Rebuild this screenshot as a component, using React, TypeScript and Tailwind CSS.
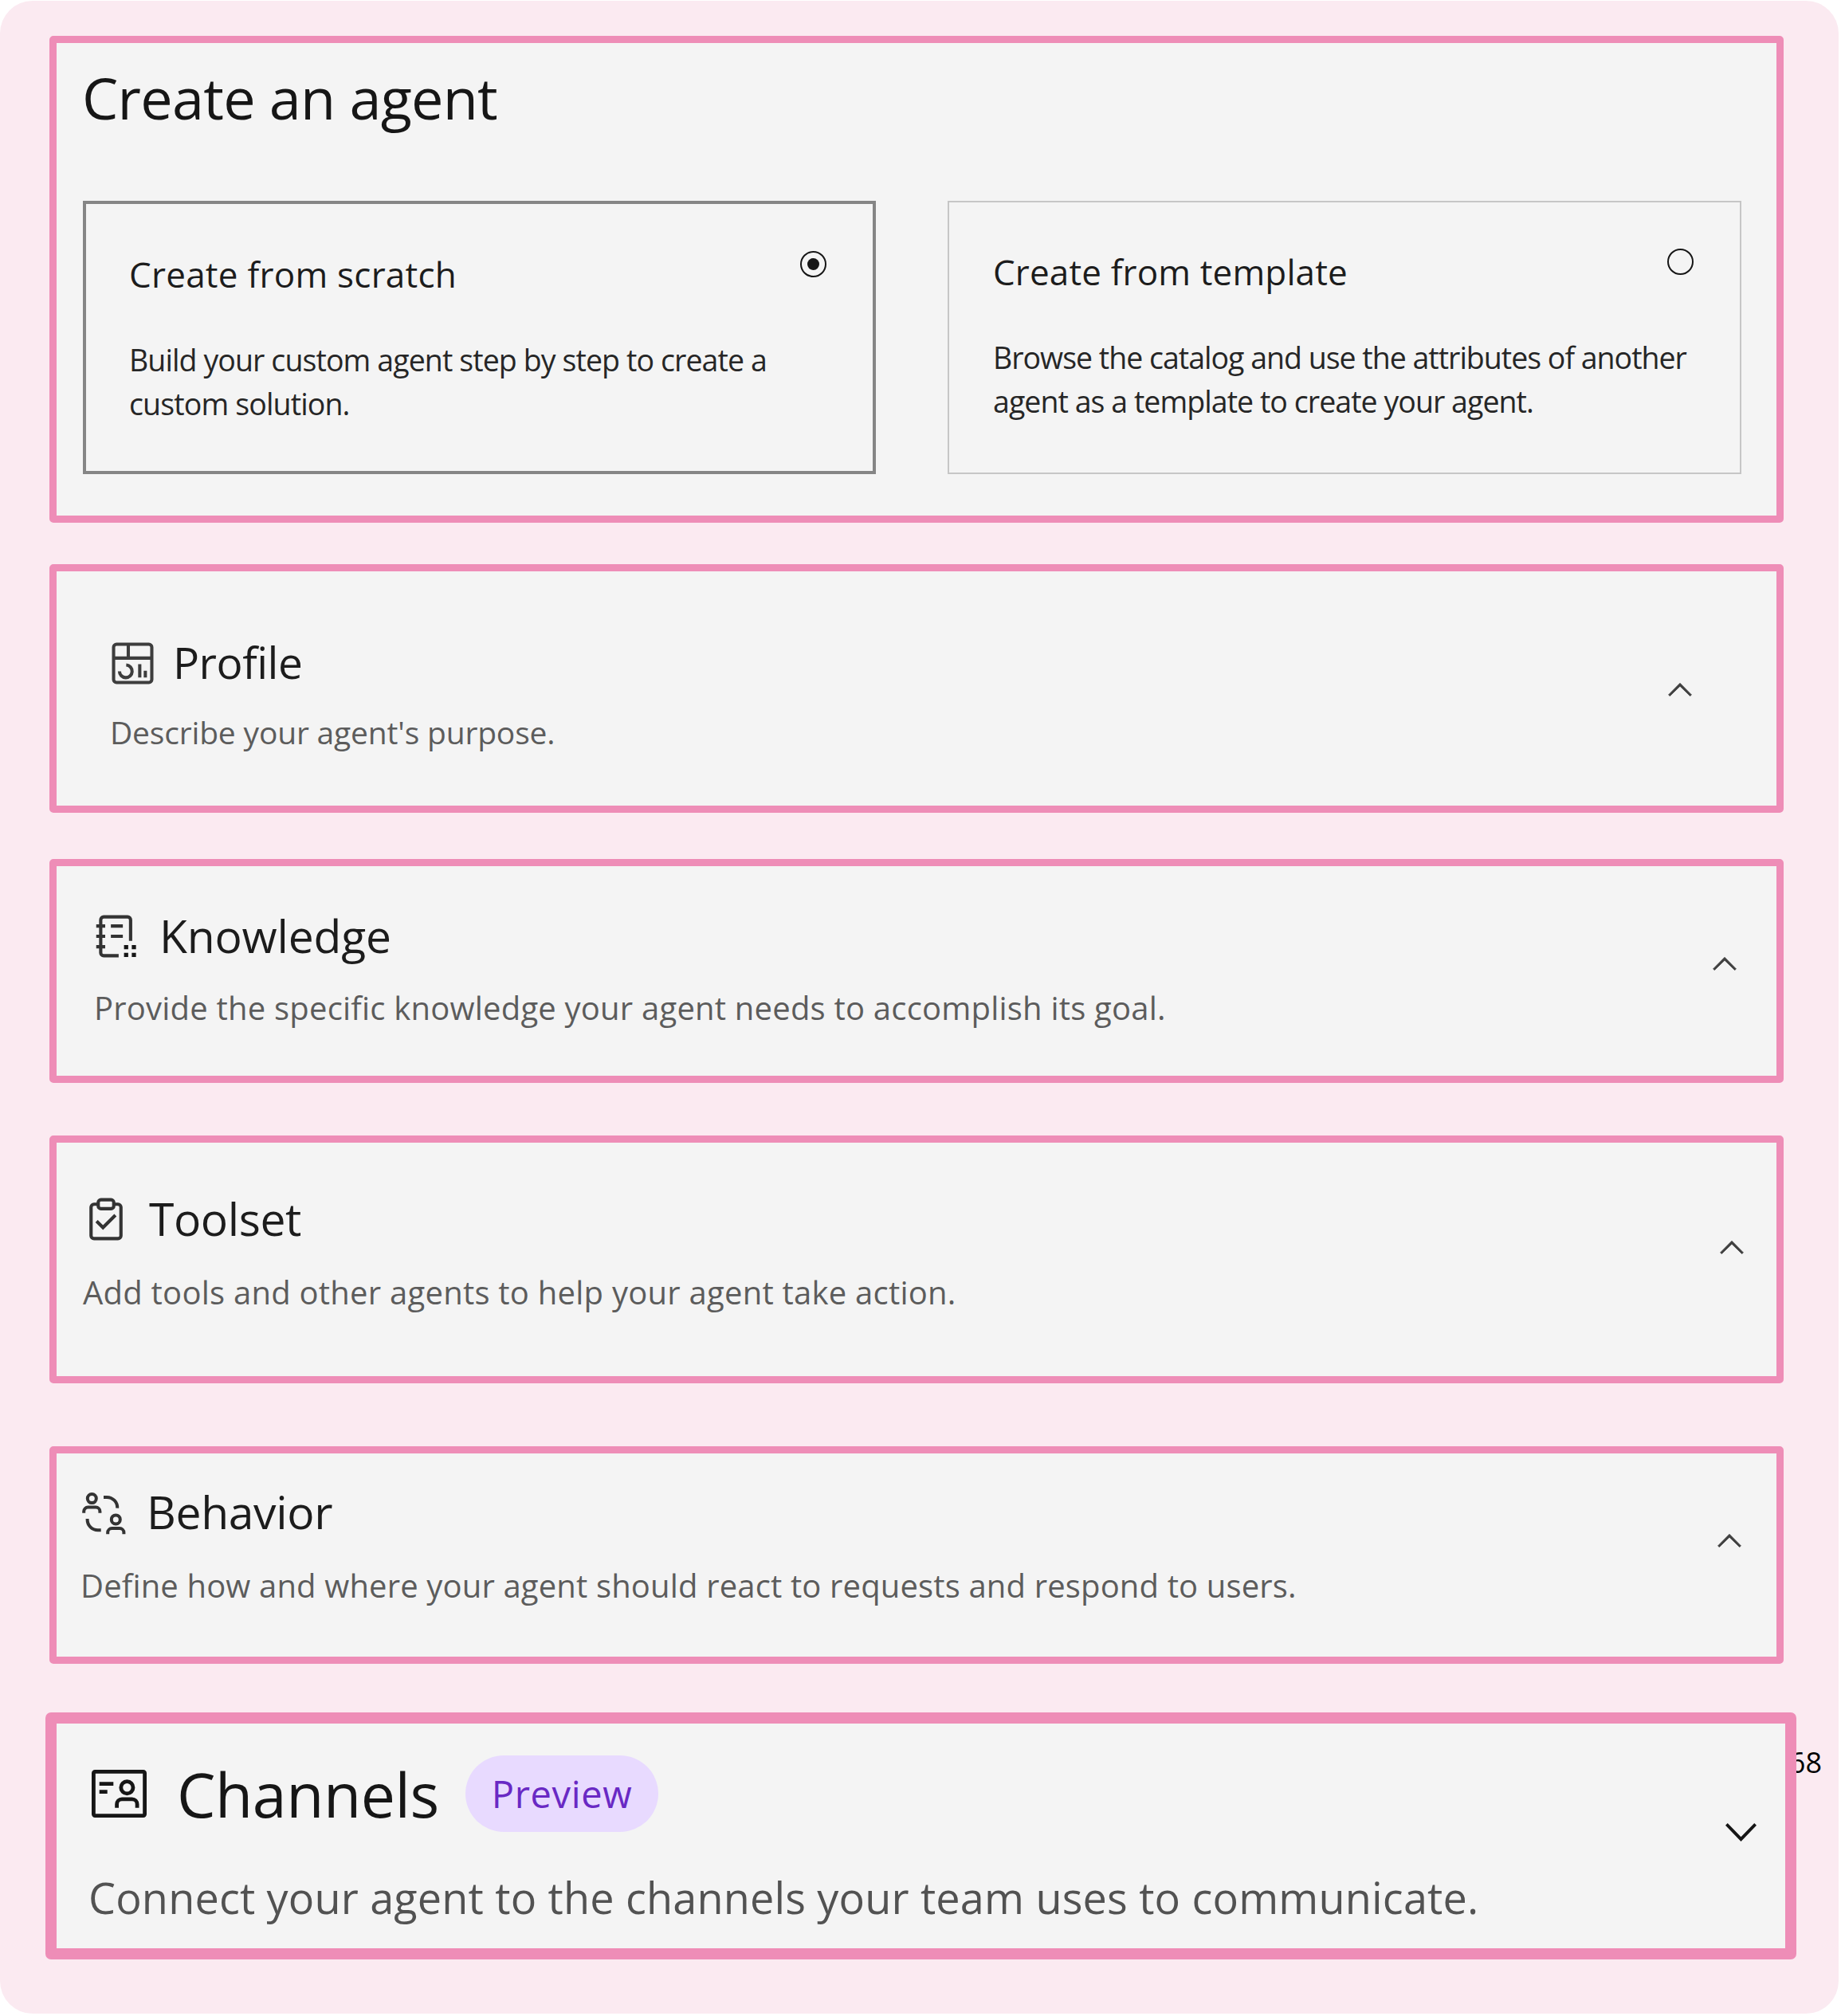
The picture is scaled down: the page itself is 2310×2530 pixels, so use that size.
import type { ReactNode } from "react";

function ProfileIcon() {
  return (
    <svg className="mt-[4px] size-[59px] shrink-0" viewBox="0 0 32 32" fill="none" stroke="#3d3d3d" strokeWidth="2.2">
      <rect x="3" y="3" width="26" height="26" rx="2" />
      <path d="M3 12.4H29M13 3V12.4" />
      <path d="M11.6 17.1 A4.3 4.3 0 1 1 7 21.4" />
      <path d="M20.8 16.6V25.6M24.6 21V25.6" />
    </svg>
  );
}

function KnowledgeIcon() {
  return (
    <svg className="mt-[3px] size-[60px] shrink-0" viewBox="0 0 32 32" fill="none" stroke="#333333" strokeWidth="2.2">
      <path d="M17 29H7a2 2 0 0 1-2-2V5a2 2 0 0 1 2-2h16a2 2 0 0 1 2 2v14" />
      <path d="M2 9.1h6M2 16h6M2 23h6M11.8 9.1h8M11.8 16h8" />
      <path d="M20.6 23.2h2.8M25.8 23.2h2.8M20.6 28.4h2.8M25.8 28.4h2.8" stroke="#161616" strokeWidth="2.8" />
    </svg>
  );
}

function ToolsetIcon() {
  return (
    <svg className="mt-[3px] size-[60px] shrink-0" viewBox="0 0 32 32" fill="none" stroke="#333333" strokeWidth="2.2">
      <path d="M10.5 6H8a2 2 0 0 0-2 2v19a2 2 0 0 0 2 2h16a2 2 0 0 0 2-2V8a2 2 0 0 0-2-2h-2.500" />
      <rect x="10.800" y="3" width="10.400" height="6" rx="1.800" />
      <path d="M9.700 17.300 14 21.600 22.300 13.300" />
    </svg>
  );
}

function BehaviorIcon() {
  return (
    <svg className="mt-[8px] h-[53px] w-[55px] shrink-0" viewBox="0 0 55 53" fill="none" stroke="#333333" strokeWidth="4">
      <circle cx="12.3" cy="7.6" r="5.5" />
      <path d="M2.2 25.7v-1.9a5.2 5.2 0 0 1 5.2-5.2h9.8a5.2 5.2 0 0 1 5.2 5.2v1.9" />
      <path d="M27 5.9h4a13.2 13.2 0 0 1 13.2 13.8" />
      <circle cx="42.3" cy="33.9" r="5.5" />
      <path d="M32.2 52.2v-1.9a5.2 5.2 0 0 1 5.2-5.2h9.8a5.2 5.2 0 0 1 5.2 5.2v1.9" />
      <path d="M6.6 33v1a13.2 13.2 0 0 0 13.2 13.3h3.9" />
    </svg>
  );
}

function ChannelsIcon() {
  return (
    <svg className="mt-[20px] h-[60px] w-[69px] shrink-0" viewBox="0 0 69 60" fill="none" stroke="#161616" strokeWidth="4.8">
      <rect x="2.4" y="2.4" width="64.2" height="55.2" rx="1.8" />
      <path d="M9.7 17.7H27.3M9.7 27.7H19.7" />
      <circle cx="44.4" cy="22.3" r="7.6" />
      <path d="M31.6 47.7v-4.5a6.4 6.4 0 0 1 6.4-6.4h12.7a6.4 6.4 0 0 1 6.4 6.4v4.5" />
    </svg>
  );
}

function ChevronUp({ className }: { className: string }) {
  return (
    <svg className={`h-[17px] w-[30px] shrink-0 ${className}`} viewBox="6 10 20 11.4" fill="#3f3f3f" stroke="#3f3f3f" strokeWidth="0.5">
      <path d="M16 10.2 25.700 20 24.500 21.1 16 12.8 7.500 21.1 6.300 20z" />
    </svg>
  );
}

function Radio({ checked = false }: { checked?: boolean }) {
  return (
    <span className="mt-px flex size-[33px] shrink-0 items-center justify-center rounded-full border-2 border-[#161616]">
      {checked && <span className="size-[15px] rounded-full bg-[#161616]" />}
    </span>
  );
}

type PanelProps = {
  panel: string;
  row: string;
  title: string;
  titleClass: string;
  text: string;
  textClass: string;
  chevron: string;
  icon: ReactNode;
};

function Panel({ panel, row, title, titleClass, text, textClass, chevron, icon }: PanelProps) {
  return (
    <section className={`flex w-[2176px] items-start justify-between rounded-[5px] border-[9px] border-[#ee8db7] bg-[#f4f4f4] ${panel}`}>
      <div>
        <div className={`flex items-start ${row}`}>
          {icon}
          <h2 className={`leading-[64px] text-[#1c1c1c] ${titleClass}`}>{title}</h2>
        </div>
        <p className={`leading-[52px] whitespace-nowrap text-[#5c5c5c] ${textClass}`}>{text}</p>
      </div>
      <ChevronUp className={chevron} />
    </section>
  );
}

export default function App() {
  return (
    <div className="h-[2530px] w-[2310px] bg-white pt-px font-['Open_Sans',sans-serif]">
      <main className="h-[2526px] w-[2307px] rounded-[41px] bg-[#fbeaf1] pt-[44px] pl-[62px]">
        <section className="h-[611px] w-[2176px] rounded-[5px] border-[9px] border-[#ee8db7] bg-[#f4f4f4] pt-[28px] pl-[33px]">
          <h1 className="-ml-px text-[72px] leading-[80px] tracking-[-0.75px] text-[#161616]">Create an agent</h1>
          <div className="mt-[90px] flex gap-[90px]">
            <div className="h-[343px] w-[995px] border-4 border-[#858585] pt-[58px] pr-[58px] pl-[54px]">
              <div className="flex h-[60px] items-start justify-between">
                <h2 className="text-[44px] leading-[60px] tracking-[0.25px] text-[#1c1c1c]">Create from scratch</h2>
                <Radio checked />
              </div>
              <p className="mt-[50px] text-[37.5px] leading-[55.4px] whitespace-nowrap text-[#262626]">
                <span className="block tracking-[-0.9px]">Build your custom agent step by step to create a</span>
                <span className="block tracking-[-0.86px]">custom solution.</span>
              </p>
            </div>
            <div className="h-[343px] w-[996px] border-2 border-[#c6c6c6] pt-[57px] pr-[58px] pl-[55px]">
              <div className="flex h-[60px] items-start justify-between">
                <h2 className="text-[44px] leading-[60px] tracking-[0.14px] text-[#1c1c1c]">Create from template</h2>
                <Radio />
              </div>
              <p className="mt-[50px] text-[37.5px] leading-[55.4px] whitespace-nowrap text-[#262626]">
                <span className="block tracking-[-1px]">Browse the catalog and use the attributes of another</span>
                <span className="block tracking-[-0.95px]">agent as a template to create your agent.</span>
              </p>
            </div>
          </div>
        </section>

        <Panel
          panel="mt-[52px] h-[312px] pt-[82px] pl-[66px]"
          row="gap-[21px]"
          icon={<ProfileIcon />}
          title="Profile"
          titleClass="text-[55px] tracking-[-0.49px]"
          text="Describe your agent's purpose."
          textClass="mt-[30px] ml-px text-[39px] tracking-[-0.18px]"
          chevron="mt-[58px] mr-[106px]"
        />
        <Panel
          panel="mt-[58px] h-[281px] pt-[55px] pl-[46px]"
          row="gap-[23px]"
          icon={<KnowledgeIcon />}
          title="Knowledge"
          titleClass="text-[57px] tracking-[-0.2px]"
          text="Provide the specific knowledge your agent needs to accomplish its goal."
          textClass="mt-[33px] ml-px text-[40px] tracking-[0.21px]"
          chevron="mt-[59px] mr-[50px]"
        />
        <Panel
          panel="mt-[66px] h-[311px] pt-[63px] pl-[32px]"
          row="gap-[24px]"
          icon={<ToolsetIcon />}
          title="Toolset"
          titleClass="text-[57px] tracking-[-0.42px]"
          text="Add tools and other agents to help your agent take action."
          textClass="mt-[35px] ml-px text-[40px] tracking-[0.24px]"
          chevron="mt-[60px] mr-[41px]"
        />
        <Panel
          panel="mt-[79px] h-[273px] pt-[41px] pl-[32px]"
          row="gap-[26px]"
          icon={<BehaviorIcon />}
          title="Behavior"
          titleClass="text-[57px] tracking-[-0.35px]"
          text="Define how and where your agent should react to requests and respond to users."
          textClass="mt-[35px] -ml-[2px] text-[40px] tracking-[0.15px]"
          chevron="mt-[60px] mr-[44px]"
        />

        <div className="relative mt-[61px]">
          <span className="absolute top-[43px] right-[21px] text-[36px] leading-[40px] text-black">68</span>
          <section className="relative -ml-[5px] flex h-[310px] w-[2197px] items-start justify-between rounded-[7px] border-[14px] border-[#ee8db7] bg-[#f4f4f4] pt-[38px] pl-[44px]">
            <div>
              <div className="flex items-start">
                <ChannelsIcon />
                <h2 className="ml-[38px] w-[362px] pt-px text-[77px] leading-[100px] tracking-[-0.45px] text-[#161616]">Channels</h2>
                <span className="mt-[2px] h-[96px] w-[242px] rounded-full bg-[#e8daff] text-center text-[47px] leading-[97px] tracking-[0.65px] text-[#6929c4]">
                  Preview
                </span>
              </div>
              <p className="mt-[44px] -ml-[4px] text-[54px] leading-[70px] tracking-[0.17px] whitespace-nowrap text-[#525252]">
                Connect your agent to the channels your team uses to communicate.
              </p>
            </div>
            <svg className="mt-[87px] mr-[36px] h-[23px] w-[39px] shrink-0" viewBox="6 10.6 20 11.4" preserveAspectRatio="none" fill="#161616">
              <path d="M16 22 6 12 7.4 10.6 16 19.2 24.6 10.6 26 12z" />
            </svg>
          </section>
        </div>
      </main>
    </div>
  );
}
